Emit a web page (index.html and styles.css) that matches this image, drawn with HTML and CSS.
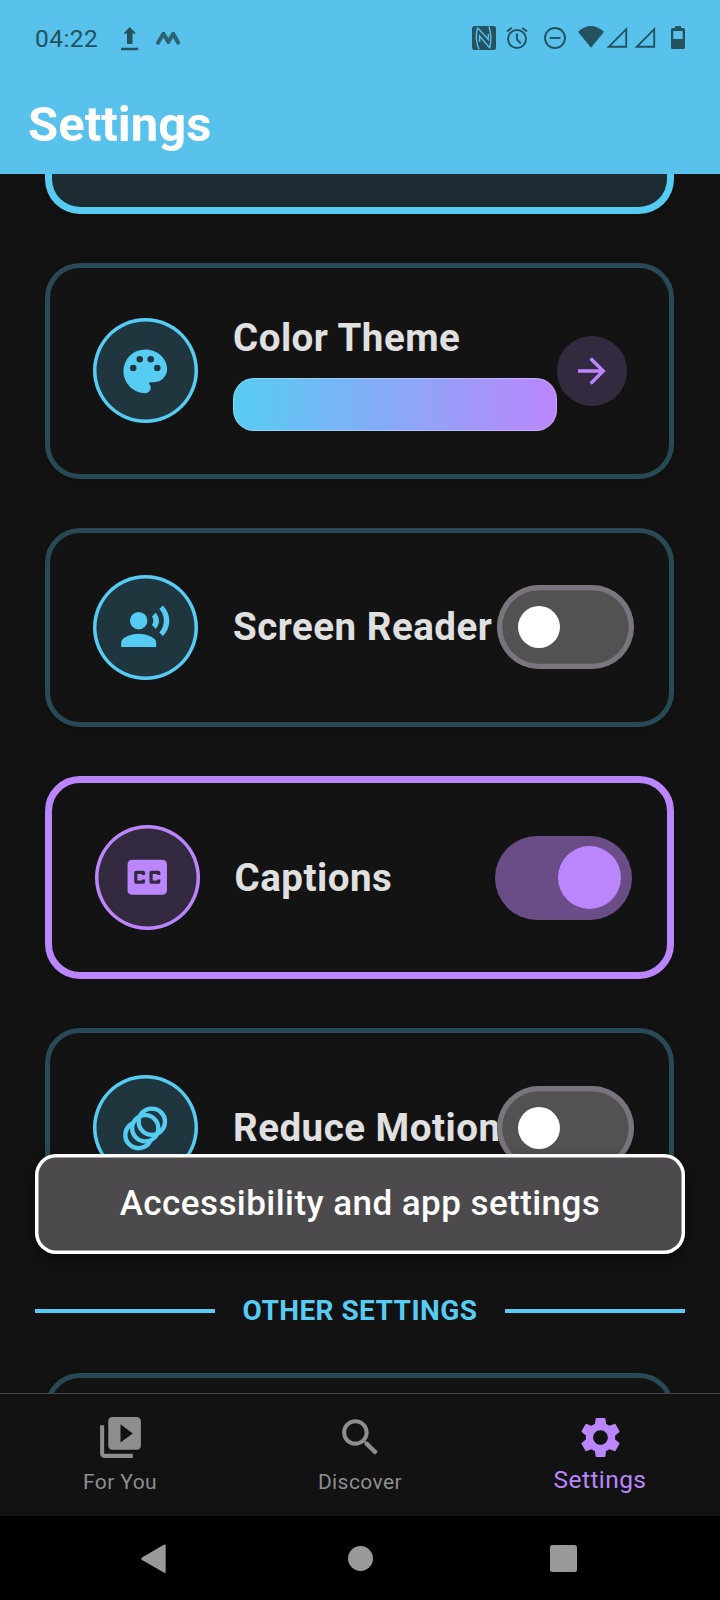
FILE: index.html
```html
<!DOCTYPE html>
<html lang="en">
<head>
<meta charset="utf-8">
<title>Settings</title>
<link rel="stylesheet" href="styles.css">
</head>
<body>
<header class="header">
  <div class="status">
    <span class="clock">04:22</span>
    <svg class="s-upload" width="18" height="26" viewBox="0 0 18 26"><path d="M8.7 1L15 7.5H11.5V18H6V7.5H2.5zM0 21.8h17.2v2.4H0z"/></svg>
    <svg class="s-wave" width="26" height="18" viewBox="0 0 26 18"><path class="wave" d="M3 13.800L8.500 4.800L13.300 13L18.200 4.800L23.200 13.800"/></svg>
    <svg class="s-nfc" width="24" height="24" viewBox="0 0 24 24"><rect width="24" height="24" rx="2.500"/><path class="cut" d="M5.600 1.500C3.800 8 3.800 16 7 23.500M17 .5C19.200 8 19.200 16 17.600 22.500M5.800 2L16.300 13.500V8M17.300 21.500L7.600 10V16"/></svg>
    <svg class="s-alarm" width="22" height="24" viewBox="0 0 22 24"><g class="line"><circle cx="11" cy="13" r="9"/><path d="M11 7.500V13.500L14.800 17.300"/><path d="M1 5.600L5.800 1.700M21 5.600L16.200 1.700"/></g></svg>
    <svg class="s-dnd" width="24" height="24" viewBox="0 0 24 24"><g class="line"><circle cx="12" cy="12" r="10"/><path d="M6.500 12h11"/></g></svg>
    <svg class="s-wifi" width="26" height="22" viewBox="0 0 26 22"><path d="M0 5.800Q13-5.800 26 5.800L13 21.700z"/></svg>
    <svg class="s-sig" width="22" height="23" viewBox="0 0 22 23"><path class="line" d="M20.200 3.200V20.800H2.800z"/></svg>
    <svg class="s-sig2" width="22" height="23" viewBox="0 0 22 23"><path class="line" d="M20.200 3.200V20.800H2.800z"/></svg>
    <svg class="s-bat" width="14" height="23" viewBox="0 0 14 23"><path fill-rule="evenodd" d="M4 0h6v2h2.500Q14 2 14 3.500V21.500Q14 23 12.500 23H1.500Q0 23 0 21.500V3.500Q0 2 1.500 2H4zM2.300 5v8h9.400V5z"/></svg>
  </div>
  <h1 class="title">Settings</h1>
</header>

<main class="content">
  <section class="card card-cut"></section>

  <section class="card card-theme">
    <div class="badge"><svg class="icon" viewBox="0 0 24 24"><path d="M17.500 12a1.500 1.500 0 1 1 0-3 1.500 1.500 0 0 1 0 3M14.500 8a1.500 1.500 0 1 1 0-3 1.500 1.500 0 0 1 0 3M9.500 8a1.500 1.500 0 1 1 0-3 1.500 1.500 0 0 1 0 3M6.500 12a1.500 1.500 0 1 1 0-3 1.500 1.500 0 0 1 0 3M12 2A10 10 0 0 0 2 12 10 10 0 0 0 12 22 2.500 2.500 0 0 0 14.500 19.500C14.500 18.890 14.270 18.330 13.900 17.910 13.800 17.800 13.750 17.680 13.750 17.500A.5.5 0 0 1 14.250 17H16A6 6 0 0 0 22 11C22 6.040 17.500 2 12 2z"/></svg></div>
    <div class="theme"><h2 class="label">Color Theme</h2><div class="swatch"></div></div>
    <div class="go"><svg viewBox="0 0 24 24"><path d="M4 11V13H16L10.500 18.500 11.920 19.920 19.840 12 11.920 4.080 10.500 5.500 16 11H4z"/></svg></div>
  </section>

  <section class="card">
    <div class="badge"><svg class="icon" viewBox="0 0 24 24"><path d="M9 5A4 4 0 0 1 13 9 4 4 0 0 1 9 13 4 4 0 0 1 5 9 4 4 0 0 1 9 5M9 15C11.670 15 17 16.340 17 19V21H1V19C1 16.340 6.330 15 9 15M16.760 5.360C18.780 7.560 18.780 10.610 16.760 12.630L15.080 10.940C15.920 9.760 15.920 8.230 15.080 7.050L16.760 5.360M20.070 2C24 6.050 23.970 12.110 20.070 16L18.440 14.370C21.210 11.190 21.210 6.650 18.440 3.630L20.070 2z"/></svg></div>
    <h2 class="label grow">Screen Reader</h2>
    <div class="switch"><span class="thumb"></span></div>
  </section>

  <section class="card card-on">
    <div class="badge"><svg class="icon" viewBox="0 0 24 24"><path d="M18 11H16.500V10.500H14.500V13.500H16.500V13H18V14A1 1 0 0 1 17 15H14A1 1 0 0 1 13 14V10A1 1 0 0 1 14 9H17A1 1 0 0 1 18 10M11 11H9.500V10.500H7.500V13.500H9.500V13H11V14A1 1 0 0 1 10 15H7A1 1 0 0 1 6 14V10A1 1 0 0 1 7 9H10A1 1 0 0 1 11 10M19 4H5C3.890 4 3 4.890 3 6V18A2 2 0 0 0 5 20H19A2 2 0 0 0 21 18V6C21 4.890 20.100 4 19 4z"/></svg></div>
    <h2 class="label grow">Captions</h2>
    <div class="switch switch-on"><span class="thumb"></span></div>
  </section>

  <section class="card card-last">
    <div class="badge"><svg class="icon rings" viewBox="0 0 24 24"><circle cx="15" cy="9" r="6"/><circle cx="12" cy="12" r="6"/><path d="M6.500 9.600A6 6 0 1 0 14.400 17.500"/></svg></div>
    <h2 class="label grow">Reduce Motion</h2>
    <div class="switch"><span class="thumb"></span></div>
  </section>

  <div class="divider"><span class="rule"></span><span class="divider-text">OTHER SETTINGS</span><span class="rule"></span></div>

  <section class="card"></section>
</main>

<div class="toast">Accessibility and app settings</div>

<nav class="tabs">
  <div class="tab"><svg viewBox="0 0 24 24"><path d="M4 6H2v14c0 1.100.9 2 2 2h14v-2H4V6zm16-4H8c-1.100 0-2 .9-2 2v12c0 1.100.9 2 2 2h12c1.100 0 2-.9 2-2V4c0-1.100-.9-2-2-2zm-8 12.500v-9l6 4.500-6 4.500z"/></svg><span>For You</span></div>
  <div class="tab"><svg viewBox="0 0 24 24"><path d="M15.500 14h-.79l-.28-.27C15.410 12.590 16 11.110 16 9.500 16 5.910 13.090 3 9.500 3S3 5.910 3 9.500 5.910 16 9.500 16c1.610 0 3.090-.59 4.230-1.570l.27.28v.79l5 4.990L20.490 19l-4.990-5zm-6 0C7.010 14 5 11.990 5 9.500S7.010 5 9.500 5 14 7.010 14 9.500 11.990 14 9.500 14z"/></svg><span>Discover</span></div>
  <div class="tab tab-active"><svg viewBox="0 0 24 24"><path d="M19.14,12.94c0.04-0.3,0.06-0.61,0.06-0.94c0-0.32-0.02-0.64-0.07-0.94l2.03-1.58c0.18-0.14,0.23-0.41,0.12-0.61l-1.92-3.32c-0.12-0.22-0.37-0.29-0.59-0.22l-2.39,0.96c-0.5-0.38-1.03-0.7-1.62-0.94L14.4,2.81c-0.04-0.24-0.24-0.41-0.48-0.41h-3.84c-0.24,0-0.43,0.17-0.47,0.41L9.25,5.35C8.66,5.59,8.12,5.92,7.63,6.29L5.24,5.33c-0.22-0.08-0.47,0-0.59,0.22L2.74,8.87C2.62,9.08,2.66,9.34,2.86,9.48l2.03,1.58C4.84,11.36,4.8,11.69,4.8,12s0.02,0.64,0.07,0.94l-2.03,1.58c-0.18,0.14-0.23,0.41-0.12,0.61l1.92,3.32c0.12,0.22,0.37,0.29,0.59,0.22l2.39-0.96c0.5,0.38,1.03,0.7,1.62,0.94l0.36,2.54c0.05,0.24,0.24,0.41,0.48,0.41h3.84c0.24,0,0.44-0.17,0.47-0.41l0.36-2.54c0.59-0.24,1.13-0.56,1.62-0.94l2.39,0.96c0.22,0.08,0.47,0,0.59-0.22l1.92-3.32c0.12-0.22,0.07-0.47-0.12-0.61L19.14,12.94z M12,15.6c-1.98,0-3.6-1.62-3.6-3.6s1.62-3.6,3.6-3.6s3.6,1.62,3.6,3.6S13.98,15.6,12,15.6z"/></svg><span>Settings</span></div>
</nav>

<footer class="sysnav">
  <svg class="back" width="25" height="30" viewBox="0 0 25 30"><path d="M22.800.7Q24.700-.2 24.700 1.800V27.700Q24.700 29.500 22.800 28.600L1 16Q-.5 14.700 1 13.400z"/></svg>
  <span class="home"></span>
  <span class="recent"></span>
</footer>
</body>
</html>
```

FILE: styles.css
```css
* { box-sizing: border-box; }

body {
  margin: 0;
  width: 720px;
  height: 1600px;
  display: flex;
  flex-direction: column;
  position: relative;
  overflow: hidden;
  background: #121212;
  font-family: Roboto, "Liberation Sans", sans-serif;
}

svg { display: block; flex: none; }

.header {
  flex: none;
  height: 174px;
  background: #58c1ec;
}

.status {
  display: flex;
  align-items: flex-start;
  height: 76px;
  padding: 26px 0 0 35px;
  fill: #24525f;
  color: #24525f;
}

.clock {
  width: 64px;
  font-size: 24.5px;
  line-height: 26px;
  letter-spacing: .45px;
}

.line {
  fill: none;
  stroke: #24525f;
  stroke-width: 1.9;
}

.wave {
  fill: none;
  stroke: #2b6274;
  stroke-width: 4;
  stroke-linecap: round;
  stroke-linejoin: round;
}

.cut {
  fill: none;
  stroke: #58c1ec;
  stroke-width: 1.4;
}

.s-upload { margin-left: 22px; }
.s-wave { margin: 3px 0 0 16px; }
.s-nfc { margin-left: 291px; }
.s-alarm { margin-left: 10px; }
.s-dnd { margin-left: 15px; }
.s-wifi { margin-left: 11px; }
.s-sig { margin-left: 2px; }
.s-sig2 { margin-left: 6px; }
.s-bat { margin-left: 15px; }

.title {
  margin: 20px 0 0 28px;
  font-size: 49px;
  line-height: 58px;
  font-weight: 700;
  color: #fff;
}

.content {
  flex: none;
  height: 1219px;
  overflow: hidden;
  padding: 0 45.600px 0 45.400px;
}

.card {
  display: flex;
  align-items: center;
  height: 199.500px;
  margin-bottom: 49px;
  padding: 0 42px 0 42.600px;
  border: 5px solid #274a56;
  border-radius: 35px;
  background: #131313;
  box-shadow: 0 2px 6px rgba(0, 0, 0, .15);
}

.card-theme { height: 215.500px; }

.card-cut {
  height: 40px;
  border: 7px solid #56ccf2;
  border-top: 0;
  border-radius: 0 0 35px 35px;
  background: #1d2c33;
}

.card-on {
  height: 203px;
  padding-left: 42.200px;
  border: 7px solid #bb86fc;
}

.card-last { margin-bottom: 0; }

/* The ring is an inset shadow, which keeps its half-pixel width. */
.badge {
  flex: none;
  display: grid;
  place-items: center;
  width: 105px;
  height: 105px;
  margin-right: 35px;
  border-radius: 50%;
  background: #20363f;
  box-shadow: inset 0 0 0 3.500px #56ccf2;
  fill: #56ccf2;
}

.card-on .badge {
  background: #342a40;
  box-shadow: inset 0 0 0 3.500px #bb86fc;
  fill: #bb86fc;
}

.icon {
  width: 52.500px;
  height: 52.500px;
}

.rings {
  fill: none;
  stroke: #56ccf2;
  stroke-width: 2;
}

.label {
  margin: 0;
  font-size: 38.500px;
  line-height: 49px;
  font-weight: 700;
  letter-spacing: .5px;
  color: #e0e0e0;
  white-space: nowrap;
}

.grow {
  flex: 1;
  min-width: 0;
  padding-bottom: 1px;
}

.theme {
  flex: 1;
  padding-top: 1px;
}

.theme .label { line-height: 52px; }

.swatch {
  height: 52.500px;
  margin-top: 14.500px;
  border: 1.750px solid rgba(255, 255, 255, .3);
  border-radius: 21px;
  background: linear-gradient(90deg, #56ccf2, #bb86fc) border-box;
}

.go {
  flex: none;
  display: grid;
  place-items: center;
  width: 70px;
  height: 70px;
  border-radius: 50%;
  background: #342a40;
  fill: #bb86fc;
}

.go svg { width: 42px; }

.switch {
  flex: none;
  display: flex;
  align-items: center;
  width: 136.500px;
  height: 84px;
  margin-right: -6.500px;
  padding-left: 21px;
  border-radius: 42px;
  background: #525252;
  box-shadow: inset 0 0 0 5.250px #79747e;
}

.thumb {
  width: 42px;
  height: 42px;
  border-radius: 50%;
  background: #fff;
}

.switch-on {
  padding-left: 63px;
  background: #6a4c86;
  box-shadow: none;
}

.switch-on .thumb {
  width: 63px;
  height: 63px;
  background: #bb86fc;
}

.divider {
  display: flex;
  align-items: center;
  gap: 27.500px;
  height: 145.500px;
  margin: 0 -10.600px 0 -10.400px;
  padding-top: 21px;
}

.rule {
  flex: 1;
  height: 3.500px;
  background: #56ccf2;
}

.divider-text {
  font-size: 28px;
  font-weight: 700;
  letter-spacing: .45px;
  color: #56ccf2;
}

.toast {
  position: absolute;
  left: 35px;
  top: 1153.500px;
  width: 650px;
  height: 100.500px;
  border-radius: 21px;
  background: #4d4a4d;
  box-shadow: inset 0 0 0 3.500px #fff, 0 6px 14px rgba(0, 0, 0, .4);
  color: #fff;
  font-size: 35px;
  line-height: 100px;
  font-weight: 500;
  letter-spacing: .44px;
  text-align: center;
}

.tabs {
  flex: none;
  display: flex;
  height: 123px;
  border-top: 1px solid #444;
  background: #121212;
}

.tab {
  flex: 1;
  display: flex;
  flex-direction: column;
  align-items: center;
  padding-top: 19px;
  fill: #8e8e8e;
  color: #8e8e8e;
  font-size: 21px;
  line-height: 28px;
  letter-spacing: .42px;
}

.tab svg {
  width: 49px;
  height: 49px;
  margin-bottom: 6px;
}

.tab-active {
  fill: #bb86fc;
  color: #bb86fc;
  font-size: 24.500px;
}

.tab-active svg { margin-bottom: 4px; }

.sysnav {
  flex: none;
  display: flex;
  align-items: center;
  height: 84px;
  padding: 0 0 0 141.200px;
  background: #000;
  fill: #999;
}

.back { margin-top: 1px; }

.home {
  width: 25px;
  height: 25px;
  margin-left: 181.800px;
  border-radius: 50%;
  background: #999;
}

.recent {
  width: 27px;
  height: 27px;
  margin-left: 177px;
  border-radius: 2.500px;
  background: #999;
}
```
